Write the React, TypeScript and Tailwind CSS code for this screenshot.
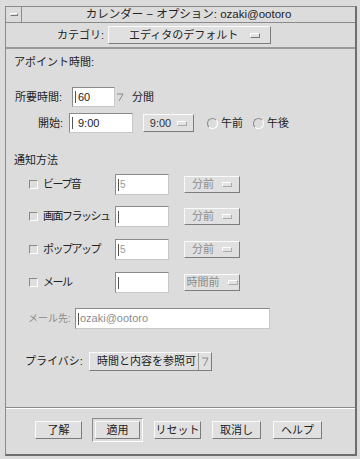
import React from 'react';

// Motif-style calendar options dialog

const FONT = { fontFamily: '"Liberation Sans", "Noto Sans CJK JP", sans-serif' };

const Notch: React.FC<{ dim?: boolean }> = ({ dim }) => (
    <span className={`inline-block shrink-0 w-[10px] h-[5px] border border-t-white border-l-white ${dim ? 'border-r-[#aaa] border-b-[#aaa]' : 'border-r-[#777] border-b-[#777]'} bg-[#e2e2e2]`} />
);

const Raised: React.FC<{ className?: string; children: React.ReactNode }> = ({ className = '', children }) => (
    <div className={`flex shrink-0 items-center border border-t-[#fafafa] border-l-[#fafafa] border-r-[#7c7c7c] border-b-[#7c7c7c] bg-[#e0e0e0] ${className}`}>
        {children}
    </div>
);

const Field: React.FC<{ className?: string; children?: React.ReactNode; cursor?: boolean }> = ({ className = '', children, cursor = true }) => (
    <div className={`flex shrink-0 items-center bg-white border border-t-[#8a8a8a] border-l-[#8a8a8a] border-r-[#c8c8c8] border-b-[#c8c8c8] ${className}`}>
        {cursor && <span className="ml-[2px] w-[1px] h-[12px] bg-[#555]" />}
        {children}
    </div>
);

const NotifyRow: React.FC<{ label: string; unit: string; top: string; value?: string }> = ({ label, unit, top, value }) => (
    <div className={`flex items-center h-[21px] ${top}`}>
        <span className="ml-[23px] shrink-0 w-[9px] h-[9px] border border-t-[#8a8a8a] border-l-[#8a8a8a] border-r-white border-b-white bg-[#dedede]" />
        <span className="ml-[5px] w-[72px] shrink-0 text-[11px] tracking-[-1.5px] text-[#222]">{label}</span>
        <Field className="w-[54px] h-[21px]">
            {value && <span className="ml-[1px] text-[10px] text-[#999]">{value}</span>}
        </Field>
        <Raised className="ml-[15px] w-[56px] h-[17px] justify-center gap-[8px] text-[11px] text-[#8c8c8c]">
            <span>{unit}</span>
            <Notch dim />
        </Raised>
    </div>
);

const Radio: React.FC<{ label: string }> = ({ label }) => (
    <div className="flex items-center">
        <span className="shrink-0 w-[11px] h-[11px] rounded-full border border-t-[#8a8a8a] border-l-[#8a8a8a] border-r-white border-b-white" />
        <span className="ml-[3px] text-[11px] text-[#222]">{label}</span>
    </div>
);

const Btn: React.FC<{ label: string; className?: string }> = ({ label, className = '' }) => (
    <Raised className={`h-[18px] justify-center text-[11px] text-[#222] ${className}`}>{label}</Raised>
);

const App: React.FC = () => {
    return (
        <div className="w-[360px] h-[459px] bg-[#dcdcdc] pt-[6px] pl-[5px] pr-[3px] pb-[3px] whitespace-nowrap" style={FONT}>
            <div className="h-full flex flex-col border border-l-[#8a8a8a] border-t-[#8a8a8a] border-r-[#6e6e6e] border-b-[#6e6e6e] border-r-2 border-b-2">
                {/* title bar */}
                <div className="flex h-[16px] border-b border-[#8a8a8a]">
                    <div className="w-[16px] flex items-center justify-center border-r border-[#8a8a8a]">
                        <span className="w-[8px] h-[3px] border border-t-white border-l-white border-r-[#777] border-b-[#777]" />
                    </div>
                    <div className="flex-1 flex items-center justify-center text-[11.5px] text-[#222]">
                        カレンダー − オプション: ozaki@ootoro
                    </div>
                </div>

                {/* category */}
                <div className="flex items-center h-[26px] border-b-2 border-b-[#9a9a9a] pl-[51px]">
                    <span className="text-[11px] text-[#222]">カテゴリ:</span>
                    <Raised className="ml-[4px] w-[163px] h-[18px] pl-[20px] pr-[10px] justify-between text-[11px] text-[#222]">
                        <span>エディタのデフォルト</span>
                        <Notch />
                    </Raised>
                </div>

                {/* main */}
                <div className="flex-1 flex flex-col">
                    <div className="h-[16px] mt-[5px] ml-[8px] flex items-center text-[11px] text-[#222]">アポイント時間:</div>

                    <div className="flex items-center h-[20px] mt-[17px]">
                        <span className="ml-[9px] w-[57px] shrink-0 text-[11px] text-[#222]">所要時間:</span>
                        <Field className="w-[43px] h-[20px]">
                            <span className="ml-[2px] text-[11px] text-[#222]">60</span>
                        </Field>
                        <svg width="10" height="20" viewBox="0 0 10 20" className="shrink-0">
                            <path d="M2 7 L8 7 L4 14" fill="none" stroke="#8a8a8a" strokeWidth="1" />
                        </svg>
                        <span className="ml-[7px] text-[11px] text-[#222]">分間</span>
                    </div>

                    <div className="flex items-center h-[20px] mt-[6px]">
                        <span className="ml-[32px] w-[31px] shrink-0 text-[11px] text-[#222]">開始:</span>
                        <Field className="w-[64px] h-[20px]">
                            <span className="ml-[5px] text-[11px] text-[#222]">9:00</span>
                        </Field>
                        <Raised className="ml-[10px] w-[51px] h-[18px] justify-center gap-[6px] text-[11px] text-[#333]">
                            <span>9:00</span>
                            <Notch dim />
                        </Raised>
                        <div className="ml-[13px]"><Radio label="午前" /></div>
                        <div className="ml-[10px]"><Radio label="午後" /></div>
                    </div>

                    <div className="h-[16px] mt-[19px] ml-[8px] flex items-center text-[11px] text-[#222]">通知方法</div>

                    <NotifyRow label="ビープ音" unit="分前" top="mt-[6px]" value="5" />
                    <NotifyRow label="画面フラッシュ" unit="分前" top="mt-[11px]" />
                    <NotifyRow label="ポップアップ" unit="分前" top="mt-[12px]" value="5" />
                    <NotifyRow label="メール" unit="時間前" top="mt-[12px]" />

                    <div className="flex items-center h-[21px] mt-[15px]">
                        <span className="ml-[22px] w-[47px] shrink-0 text-[10px] text-[#8c8c8c]">メール先:</span>
                        <Field className="w-[195px] h-[21px]">
                            <span className="ml-[1px] text-[11px] text-[#8c8c8c]">ozaki@ootoro</span>
                        </Field>
                    </div>

                    <div className="flex items-center h-[19px] mt-[23px]">
                        <span className="ml-[19px] w-[64px] shrink-0 text-[11px] text-[#222]">プライバシ:</span>
                        <Raised className="w-[123px] h-[19px] text-[11px] text-[#222]">
                            <span className="pl-[7px] w-[108px] shrink-0">時間と内容を参照可</span>
                            <span className="h-full border-l border-[#9a9a9a] flex-1 flex items-center justify-center">
                                <svg width="8" height="12" viewBox="0 0 8 12">
                                    <path d="M1 2 L7 2 L3 10" fill="none" stroke="#8a8a8a" strokeWidth="1" />
                                </svg>
                            </span>
                        </Raised>
                    </div>
                </div>

                {/* separator */}
                <div className="h-[2px] border-t border-t-[#8a8a8a] border-b border-b-white" />

                {/* buttons */}
                <div className="h-[45px] flex items-center pl-[29px] pb-[3px]">
                    <Btn label="了解" className="w-[47px]" />
                    <div className="ml-[10px] p-[2px] border border-t-[#8a8a8a] border-l-[#8a8a8a] border-r-white border-b-white">
                        <Btn label="適用" className="w-[45px]" />
                    </div>
                    <Btn label="リセット" className="ml-[11px] w-[47px]" />
                    <Btn label="取消し" className="ml-[11px] w-[49px]" />
                    <Btn label="ヘルプ" className="ml-[12px] w-[49px]" />
                </div>
            </div>
        </div>
    );
};

export default App;
